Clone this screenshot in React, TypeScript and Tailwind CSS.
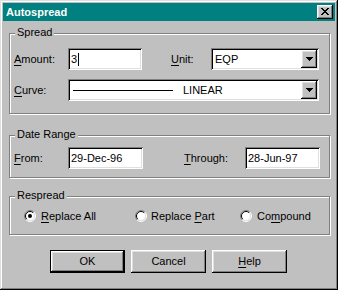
import React from "react";

const raised =
  "shadow-[inset_-1px_-1px_#000000,inset_1px_1px_#ffffff,inset_-2px_-2px_#808080,inset_2px_2px_#dfdfdf]";
const sunken =
  "shadow-[inset_1px_1px_#808080,inset_-1px_-1px_#ffffff,inset_2px_2px_#000000,inset_-2px_-2px_#dfdfdf]";
const etched = "border border-[#808080] shadow-[inset_1px_1px_#ffffff,1px_1px_#ffffff]";

function Key({ text, at }: { text: string; at: number }) {
  return (
    <>
      {text.slice(0, at)}
      <span className="underline underline-offset-[2px]">{text[at]}</span>
      {text.slice(at + 1)}
    </>
  );
}

function Group({ label, className, children }: { label: string; className: string; children: React.ReactNode }) {
  return (
    <div className={`relative ml-[6px] w-[321px] ${etched} ${className}`}>
      <span className="absolute -top-[8px] left-[5px] px-[2px] bg-[#c0c0c0] leading-[13px]">{label}</span>
      {children}
    </div>
  );
}

function TextBox({ value, width, caret }: { value: string; width: string; caret?: boolean }) {
  return (
    <div className={`${width} h-[22px] bg-white ${sunken} flex items-center pl-[3px]`}>
      <span>{value}</span>
      {caret && <span className="w-px h-[13px] bg-black ml-[1px]" />}
    </div>
  );
}

function Arrow() {
  return (
    <svg width="7" height="4" viewBox="0 0 7 4" shapeRendering="crispEdges">
      <rect x="0" y="0" width="7" height="1" fill="#000" />
      <rect x="1" y="1" width="5" height="1" fill="#000" />
      <rect x="2" y="2" width="3" height="1" fill="#000" />
      <rect x="3" y="3" width="1" height="1" fill="#000" />
    </svg>
  );
}

function Select({ width, children }: { width: string; children: React.ReactNode }) {
  return (
    <div className={`${width} h-[22px] bg-white ${sunken} flex items-stretch p-[2px]`}>
      <div className="flex-1 flex items-center pl-[2px]">{children}</div>
      <div className={`w-[16px] bg-[#c0c0c0] ${raised} flex items-center justify-center`}>
        <Arrow />
      </div>
    </div>
  );
}

function Radio({ checked }: { checked?: boolean }) {
  return (
    <svg width="12" height="12" viewBox="0 0 12 12">
      <circle cx="6" cy="6" r="5" fill="#fff" />
      <path d="M2.1 9.9 A5.5 5.5 0 0 1 9.9 2.1" stroke="#808080" fill="none" />
      <path d="M9.9 2.1 A5.5 5.5 0 0 1 2.1 9.9" stroke="#ffffff" fill="none" />
      <path d="M2.8 9.2 A4.5 4.5 0 0 1 9.2 2.8" stroke="#000000" fill="none" />
      <path d="M9.2 2.8 A4.5 4.5 0 0 1 2.8 9.2" stroke="#dfdfdf" fill="none" />
      {checked && <circle cx="6" cy="6" r="2" fill="#000" />}
    </svg>
  );
}

function Button({ children, isDefault }: { children: React.ReactNode; isDefault?: boolean }) {
  return (
    <div className={`w-[75px] h-[23px] ${isDefault ? "border border-black" : ""} bg-[#c0c0c0]`}>
      <div className={`w-full h-full ${raised} flex items-center justify-center`}>{children}</div>
    </div>
  );
}

export default function App() {
  return (
    <div className="w-[338px] h-[290px] bg-[#c0c0c0] p-[3px] shadow-[inset_-1px_-1px_#000000,inset_1px_1px_#dfdfdf,inset_-2px_-2px_#808080,inset_2px_2px_#ffffff] flex flex-col font-['Liberation_Sans',Arial,sans-serif] text-[11px] text-black">
      <div className="h-[18px] bg-[#008080] flex items-center justify-between pl-[3px] pr-[2px]">
        <span className="text-white font-bold text-[11px]">Autospread</span>
        <div className={`w-[16px] h-[14px] bg-[#c0c0c0] ${raised} flex items-center justify-center`}>
          <svg width="8" height="7" viewBox="0 0 8 7" shapeRendering="crispEdges" className="mb-[1px]">
            <path d="M0 0h2v1h-2zM6 0h2v1h-2zM1 1h2v1h-2zM5 1h2v1h-2zM2 2h4v1h-4zM3 3h2v1h-2zM2 4h4v1h-4zM1 5h2v1h-2zM5 5h2v1h-2zM0 6h2v1h-2zM6 6h2v1h-2z" fill="#000" />
          </svg>
        </div>
      </div>

      <Group label="Spread" className="mt-[12px] h-[81px] pt-[14px] pl-[4px]">
        <div className="flex items-center h-[22px]">
          <span className="w-[54px]"><Key text="Amount:" at={0} /></span>
          <TextBox value="3" width="w-[74px]" caret />
          <span className="ml-[29px] w-[40px]"><Key text="Unit:" at={0} /></span>
          <Select width="w-[108px]">EQP</Select>
        </div>
        <div className="flex items-center h-[22px] mt-[9px]">
          <span className="w-[54px]"><Key text="Curve:" at={0} /></span>
          <Select width="w-[251px]">
            <div className="flex items-center w-full">
              <span className="ml-[1px] w-[100px] h-px bg-black" />
              <span className="ml-[10px]">LINEAR</span>
            </div>
          </Select>
        </div>
      </Group>

      <Group label="Date Range" className="mt-[21px] h-[43px] pt-[11px] pl-[4px]">
        <div className="flex items-center h-[22px]">
          <span className="w-[54px]"><Key text="From:" at={0} /></span>
          <TextBox value="29-Dec-96" width="w-[75px]" />
          <span className="ml-[41px] w-[61px]"><Key text="Through:" at={0} /></span>
          <TextBox value="28-Jun-97" width="w-[75px]" />
        </div>
      </Group>

      <Group label="Respread" className="mt-[18px] h-[39px] pt-[11px] pl-[14px]">
        <div className="flex items-center h-[16px]">
          <div className="w-[111px] flex items-center gap-[5px]">
            <Radio checked />
            <span><Key text="Replace All" at={0} /></span>
          </div>
          <div className="w-[105px] flex items-center gap-[4px]">
            <Radio />
            <span><Key text="Replace Part" at={8} /></span>
          </div>
          <div className="flex items-center gap-[5px]">
            <Radio />
            <span><Key text="Compound" at={2} /></span>
          </div>
        </div>
      </Group>

      <div className="flex gap-[6px] pl-[47px] mt-[15px]">
        <Button isDefault>OK</Button>
        <Button>Cancel</Button>
        <Button><Key text="Help" at={0} /></Button>
      </div>
    </div>
  );
}
